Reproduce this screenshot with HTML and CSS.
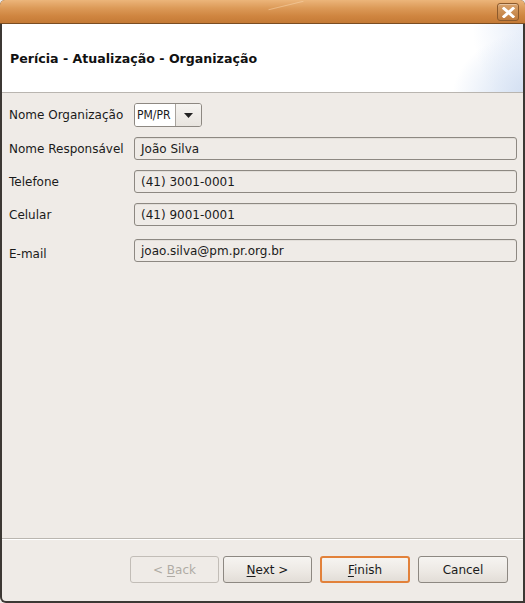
FILE: index.html
```html
<!DOCTYPE html>
<html>
<head>
<meta charset="utf-8">
<link rel="stylesheet" href="styles.css">
</head>
<body>
<div class="window">
  <div class="titlebar">
    <div class="shine"></div>
    <div class="close">
      <svg width="13" height="11" viewBox="0 0 13 11"><path d="M2 1.5 L11 9.5 M11 1.5 L2 9.5" stroke="#fff" stroke-width="3" stroke-linecap="square"/></svg>
    </div>
  </div>
  <div class="body">
    <div class="header">
      <div class="header-title">Perícia - Atualização - Organização</div>
      <div class="swoosh"></div>
    </div>
    <div class="form">
      <div class="row r1">
        <span class="label">Nome Organização</span>
        <div class="combo">
          <span class="combo-value">PM/PR</span>
          <span class="combo-btn"><svg width="9" height="5" viewBox="0 0 9 5"><path d="M0 0 H9 L4.5 5 Z" fill="#222"/></svg></span>
        </div>
      </div>
      <div class="row r2">
        <span class="label">Nome Responsável</span>
        <div class="field">João Silva</div>
      </div>
      <div class="row r3">
        <span class="label">Telefone</span>
        <div class="field">(41) 3001-0001</div>
      </div>
      <div class="row r4">
        <span class="label">Celular</span>
        <div class="field">(41) 9001-0001</div>
      </div>
      <div class="row r5">
        <span class="label lower">E-mail</span>
        <div class="field">joao.silva@pm.pr.org.br</div>
      </div>
    </div>
    <div class="footer">
      <button class="btn narrow disabled">&lt; <u>B</u>ack</button>
      <button class="btn narrow"><u>N</u>ext &gt;</button>
      <button class="btn default"><u>F</u>inish</button>
      <button class="btn">Cancel</button>
    </div>
  </div>
</div>
</body>
</html>
```
FILE: styles.css
```css
html, body {
  margin: 0;
  padding: 0;
  background: #efebe7;
}
.window {
  width: 525px;
  height: 603px;
  box-sizing: border-box;
  display: flex;
  flex-direction: column;
  font-family: "DejaVu Sans", sans-serif;
  font-size: 12px;
  color: #1a1a1a;
  background: #3c3834;
  border-radius: 5px 5px 0 6px;
  overflow: hidden;
}
.titlebar {
  position: relative;
  height: 24px;
  flex: none;
  background: linear-gradient(to bottom, #ecb57a 0%, #dc9a58 35%, #cf8540 70%, #c47a36 100%);
  border-bottom: 1px solid #7a4d22;
  box-sizing: border-box;
}
.shine {
  position: absolute;
  left: 268px;
  top: 5px;
  width: 36px;
  height: 1px;
  background: rgba(250, 215, 175, 0.5);
  transform: rotate(-14deg);
}
.close {
  position: absolute;
  right: 6px;
  top: 3px;
  width: 22px;
  height: 18px;
  box-sizing: border-box;
  border: 1px solid #8c5a2c;
  border-radius: 3px;
  background: linear-gradient(to bottom, #d9a36c, #c07c3d);
  display: flex;
  align-items: center;
  justify-content: center;
  box-shadow: inset 0 1px 0 rgba(255,255,255,0.35);
}
.body {
  flex: 1;
  margin: 0 2px 2px 2px;
  background: #efebe7;
  display: flex;
  flex-direction: column;
  border-radius: 0 0 0 4px;
}
.header {
  position: relative;
  height: 68px;
  flex: none;
  background: #fff;
  border-bottom: 1px solid #b9b5b0;
  display: flex;
  align-items: center;
  overflow: hidden;
}
.header-title {
  font-weight: bold;
  font-size: 12.6px;
  padding-left: 8px;
  padding-top: 1px;
  color: #111;
}
.swoosh {
  position: absolute;
  right: 0;
  top: 0;
  width: 95px;
  height: 68px;
  background:
    radial-gradient(ellipse 90px 70px at 120% 110%, rgba(196, 212, 236, 0.9) 0%, rgba(214, 226, 244, 0.7) 50%, rgba(255,255,255,0) 100%),
    radial-gradient(ellipse 60px 90px at 110% 0%, rgba(220, 230, 246, 0.8) 0%, rgba(255,255,255,0) 100%);
}
.form {
  padding: 10px 6px 0 7px;
  display: flex;
  flex-direction: column;
}
.row {
  display: flex;
  align-items: center;
  height: 23px;
}
.r2 { margin-top: 11px; }
.r3 { margin-top: 10px; }
.r4 { margin-top: 10px; }
.r5 { margin-top: 13px; }
.label {
  width: 125px;
  flex: none;
}
.lower { padding-top: 6px; }
.field {
  flex: 1;
  height: 23px;
  box-sizing: border-box;
  border: 1px solid #8d8882;
  border-radius: 3px;
  padding: 0 0 0 6px;
  display: flex;
  align-items: center;
  background: #efebe7;
  box-shadow: inset 0 1px 0 #e2ded9;
}
.combo {
  display: flex;
  height: 24px;
  box-sizing: border-box;
  border: 1px solid #8d8882;
  border-radius: 3px;
  overflow: hidden;
  margin-top: 1px;
}
.combo-value {
  background: #fff;
  width: 41px;
  box-sizing: border-box;
  border-right: 1px solid #a8a39d;
  font-family: "DejaVu Sans Condensed", "DejaVu Sans", sans-serif;
  font-size: 12px;
  display: flex;
  align-items: center;
  padding-left: 2px;
}
.combo-btn {
  width: 25px;
  display: flex;
  align-items: center;
  justify-content: center;
  background: linear-gradient(to bottom, #f6f4f1, #e8e4df);
}
.footer {
  margin-top: auto;
  border-top: 1px solid #bab6b0;
  box-shadow: inset 0 1px 0 #fff;
  height: 63px;
  box-sizing: border-box;
  display: flex;
  justify-content: flex-end;
  align-items: flex-start;
  padding: 17px 15px 0 0;
  gap: 4px;
}
.btn {
  width: 90px;
  height: 27px;
  box-sizing: border-box;
  border: 1px solid #8d8882;
  border-radius: 3px;
  background: linear-gradient(to bottom, #f6f4f1 0%, #ece8e3 60%, #e2ddd7 100%);
  font-family: "DejaVu Sans", sans-serif;
  font-size: 12px;
  color: #1a1a1a;
  padding: 0;
}
.btn.narrow { width: 89px; }
.btn u { text-decoration: underline; text-underline-offset: 2px; }
.btn.disabled {
  color: #b0aba5;
  border-color: #c2bdb7;
  background: #efebe7;
}
.btn.default {
  border: 2px solid #e2813a;
  margin-left: 4px;
  margin-right: 4px;
}
```
